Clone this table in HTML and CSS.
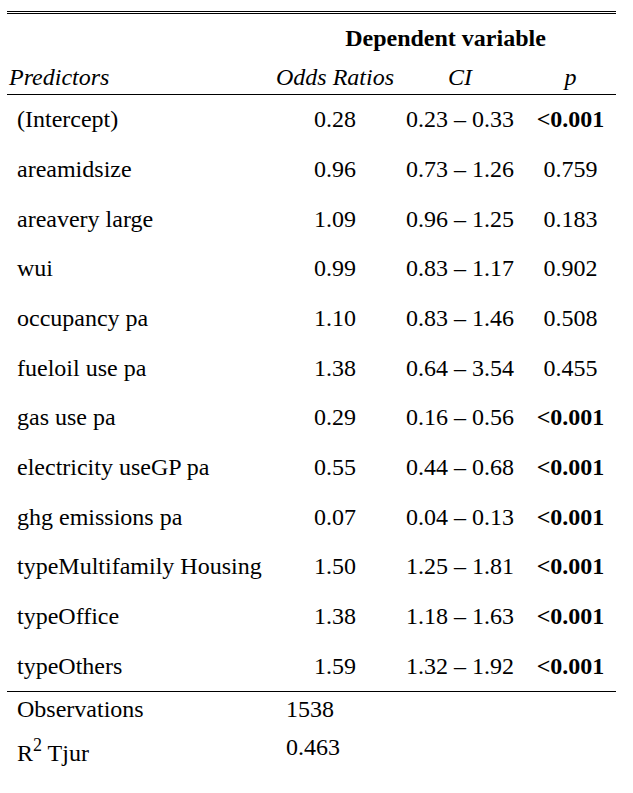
FILE: index.html
```html
<!DOCTYPE html>
<html>
<head>
<meta charset="utf-8">
<link rel="stylesheet" href="styles.css">
</head>
<body>
<table class="model">
  <colgroup>
    <col class="c-label">
    <col class="c-est">
    <col class="c-ci">
    <col class="c-p">
  </colgroup>
  <thead>
    <tr class="dep-row">
      <th class="blank"></th>
      <th class="dep" colspan="3">Dependent variable</th>
    </tr>
    <tr class="head-row">
      <th class="h-label">Predictors</th>
      <th class="h-col">Odds Ratios</th>
      <th class="h-col">CI</th>
      <th class="h-col">p</th>
    </tr>
  </thead>
  <tbody>
    <tr><td class="lbl">(Intercept)</td><td class="num">0.28</td><td class="num">0.23 – 0.33</td><td class="num sig">&lt;0.001</td></tr>
    <tr><td class="lbl">areamidsize</td><td class="num">0.96</td><td class="num">0.73 – 1.26</td><td class="num">0.759</td></tr>
    <tr><td class="lbl">areavery large</td><td class="num">1.09</td><td class="num">0.96 – 1.25</td><td class="num">0.183</td></tr>
    <tr><td class="lbl">wui</td><td class="num">0.99</td><td class="num">0.83 – 1.17</td><td class="num">0.902</td></tr>
    <tr><td class="lbl">occupancy pa</td><td class="num">1.10</td><td class="num">0.83 – 1.46</td><td class="num">0.508</td></tr>
    <tr><td class="lbl">fueloil use pa</td><td class="num">1.38</td><td class="num">0.64 – 3.54</td><td class="num">0.455</td></tr>
    <tr><td class="lbl">gas use pa</td><td class="num">0.29</td><td class="num">0.16 – 0.56</td><td class="num sig">&lt;0.001</td></tr>
    <tr><td class="lbl">electricity useGP pa</td><td class="num">0.55</td><td class="num">0.44 – 0.68</td><td class="num sig">&lt;0.001</td></tr>
    <tr><td class="lbl">ghg emissions pa</td><td class="num">0.07</td><td class="num">0.04 – 0.13</td><td class="num sig">&lt;0.001</td></tr>
    <tr><td class="lbl">typeMultifamily Housing</td><td class="num">1.50</td><td class="num">1.25 – 1.81</td><td class="num sig">&lt;0.001</td></tr>
    <tr><td class="lbl">typeOffice</td><td class="num">1.38</td><td class="num">1.18 – 1.63</td><td class="num sig">&lt;0.001</td></tr>
    <tr><td class="lbl">typeOthers</td><td class="num">1.59</td><td class="num">1.32 – 1.92</td><td class="num sig">&lt;0.001</td></tr>
  </tbody>
  <tfoot>
    <tr class="sum-row first"><td class="s-lbl">Observations</td><td class="s-val" colspan="3">1538</td></tr>
    <tr class="sum-row"><td class="s-lbl">R<sup class="sq">2</sup> Tjur</td><td class="s-val" colspan="3">0.463</td></tr>
  </tfoot>
</table>
</body>
</html>
```

FILE: styles.css
```css
html, body {
  margin: 0;
  padding: 0;
  background: #ffffff;
}

body {
  font-family: "Liberation Serif", "Times New Roman", serif;
  font-size: 24px;
  line-height: 27px;
  color: #000000;
}

.model {
  border-collapse: collapse;
  table-layout: fixed;
  width: 609px;
  margin: 11px 0 0 7px;
  border-top: 3px double #000000;
}

.c-label { width: 268px; }
.c-est { width: 120px; }
.c-ci { width: 130px; }
.c-p { width: 91px; }

th, td {
  padding: 0;
  vertical-align: top;
  font-weight: normal;
}

.dep-row th {
  padding-top: 11px;
  padding-bottom: 5px;
}

.dep {
  font-weight: bold;
  text-align: center;
}

.head-row th {
  padding-top: 7px;
  padding-bottom: 3px;
  border-bottom: 1px solid #000000;
  font-style: italic;
}

.h-label {
  text-align: left;
  padding-left: 2px;
}

.h-col {
  text-align: center;
}

tbody td {
  padding-top: 11.4px;
  padding-bottom: 11.27px;
}

tbody tr:last-child td {
  border-bottom: 1px solid #000000;
}

.lbl {
  text-align: left;
  padding-left: 10px;
  white-space: nowrap;
}

.num {
  text-align: center;
  white-space: nowrap;
}

.sig {
  font-weight: bold;
}

.sum-row td {
  padding-top: 4px;
  padding-bottom: 0;
}

.sum-row.first td {
  padding-bottom: 7.4px;
}

.s-lbl {
  text-align: left;
  padding-left: 10px;
}

.s-val {
  text-align: left;
  padding-left: 11px;
}

.sq {
  font-size: 18px;
  line-height: 23px;
  vertical-align: 10px;
}
```
